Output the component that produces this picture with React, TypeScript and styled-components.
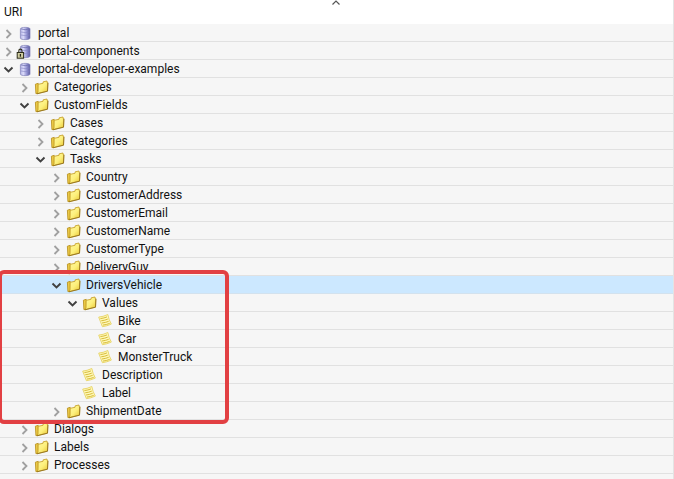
import React, { useState } from "react";
import styled, { createGlobalStyle } from "styled-components";

const GlobalStyle = createGlobalStyle`
  *, *::before, *::after { box-sizing: border-box; }
  body {
    margin: 0;
    min-height: 100vh;
    background: #f6f6f6;
    color: #111;
    font-family: Roboto, "Noto Sans", sans-serif;
    font-size: 12px;
    line-height: 17px;
  }
`;

const Page = styled.main`
  display: flex;
  flex-direction: column;
  min-height: 100vh;
  overflow: hidden;
  border-right: 1px solid #e4e4e4;
`;

const Header = styled.header`
  display: grid;
  grid-template-columns: 1fr auto 1fr;
  height: 24px;
  padding: 0 6px 0 4px;
  background: #fff;
`;

const ColumnTitle = styled.span`
  align-self: center;
`;

const TreeArea = styled.div`
  position: relative;
`;

const List = styled.ul`
  margin: 0;
  padding: 0;
  list-style: none;
`;

const Row = styled.div<{ $level: number; $selected?: boolean }>`
  display: flex;
  align-items: center;
  height: 18px;
  padding-left: ${(p) => p.$level * 16}px;
  border-bottom: 1px solid ${(p) => (p.$selected ? "#d3e2ee" : "#e1e1e1")};
  background: ${(p) => (p.$selected ? "#cce8ff" : "transparent")};
`;

const Toggle = styled.button<{ $open: boolean }>`
  display: flex;
  width: 18px;
  height: 17px;
  padding: 2px 0 0;
  border: 0;
  background: none;
  color: ${(p) => (p.$open ? "#404040" : "#a0a0a0")};
`;

const LeafSpace = styled.span`
  width: 18px;
`;

const IconBox = styled.span`
  display: flex;
  width: 20px;
  height: 16px;
`;

const Name = styled.span`
  padding-top: 2px;
`;

const Highlight = styled.div`
  position: absolute;
  top: 246px;
  left: -2px;
  width: 231px;
  height: 154px;
  border: 4px solid #e24043;
  border-radius: 6px;
  pointer-events: none;
`;

type Kind = "db" | "locked" | "folder" | "note";

interface Item {
  name: string;
  kind: Kind;
  open?: boolean;
  selected?: boolean;
  items?: Item[];
}

const folder = (name: string, items?: Item[], selected?: boolean): Item => ({
  name,
  kind: "folder",
  items,
  open: !!items,
  selected,
});
const note = (name: string): Item => ({ name, kind: "note" });

const data: Item[] = [
  { name: "portal", kind: "db" },
  { name: "portal-components", kind: "locked" },
  {
    name: "portal-developer-examples",
    kind: "db",
    open: true,
    items: [
      folder("Categories"),
      folder("CustomFields", [
        folder("Cases"),
        folder("Categories"),
        folder("Tasks", [
          folder("Country"),
          folder("CustomerAddress"),
          folder("CustomerEmail"),
          folder("CustomerName"),
          folder("CustomerType"),
          folder("DeliveryGuy"),
          folder(
            "DriversVehicle",
            [
              folder("Values", [note("Bike"), note("Car"), note("MonsterTruck")]),
              note("Description"),
              note("Label"),
            ],
            true
          ),
          folder("ShipmentDate"),
        ]),
      ]),
      folder("Dialogs"),
      folder("Labels"),
      folder("Processes"),
    ],
  },
];

function Chevron({ open }: { open: boolean }) {
  return (
    <svg width="16" height="16" viewBox="0 0 16 16" fill="none" stroke="currentColor" aria-hidden="true">
      <path d={open ? "M4.5 5.5 8.5 9.5 12.5 5.5" : "M6.5 4 10.5 8 6.5 12"} strokeWidth={open ? 1.9 : 1.8} />
    </svg>
  );
}

function DatabaseIcon({ locked }: { locked: boolean }) {
  return (
    <svg width="16" height="16" viewBox="0 0 16 16" overflow="visible" aria-hidden="true">
      <defs>
        <linearGradient id="cylinder">
          <stop offset="0" stopColor="#b4b4e6" />
          <stop offset="0.3" stopColor="#dcdcfa" />
          <stop offset="0.65" stopColor="#9696d4" />
          <stop offset="1" stopColor="#5a5a9e" />
        </linearGradient>
      </defs>
      <path d="M2.4 3.8C2.4 1.9 12 1.9 12 3.8V13.2C12 15.1 2.4 15.1 2.4 13.2Z" fill="url(#cylinder)" stroke="#8080b8" strokeWidth="0.7" />
      <path d="M3 3.9Q7 5.5 11.5 3.9" fill="none" stroke="#7070b0" strokeWidth="0.8" />
      <path d="M3 7Q7 8.3 11.5 7M3 10Q7 11.3 11.5 10" fill="none" stroke="#8484c2" strokeWidth="0.6" />
      {locked && (
        <g>
          <path d="M0.8 9.5V8Q0.8 6.1 2.4 6.1T4 8V9.5" fill="none" stroke="#30301c" strokeWidth="1.1" />
          <rect x="-0.8" y="9.5" width="6.4" height="5.7" fill="#d0cda0" stroke="#2b2b18" strokeWidth="1" />
          <path d="M2.4 11V13.7" stroke="#25251a" strokeWidth="1.3" />
        </g>
      )}
    </svg>
  );
}

function FolderIcon() {
  return (
    <svg width="16" height="16" viewBox="0 0 16 16" aria-hidden="true">
      <defs>
        <linearGradient id="folder" x1="0" y1="0" x2="1" y2="1">
          <stop offset="0" stopColor="#fff9a8" />
          <stop offset="0.55" stopColor="#fdf07c" />
          <stop offset="1" stopColor="#e6c32e" />
        </linearGradient>
      </defs>
      <path d="M1.4 5.2 4.2 4.3 4.4 14.3 1.9 14.6Z" fill="#eccb48" stroke="#b48c18" strokeWidth="0.8" strokeLinejoin="round" />
      <path d="M4.2 5.3 9 4.3 9.2 2.8 13 2 13.2 3.6 13.9 3.7 13.5 12.1 3.2 14.7 2.2 14.4 4 13.3Z" fill="url(#folder)" stroke="#c39b20" strokeWidth="0.8" strokeLinejoin="round" />
      <path d="M13.9 3.8 13.5 12.2 2.8 14.8" fill="none" stroke="#8b6b18" strokeWidth="0.8" />
    </svg>
  );
}

function NoteIcon() {
  return (
    <svg width="16" height="16" viewBox="0 0 16 16" aria-hidden="true">
      <path d="M0.7 4.1Q5 3.8 9.8 1.5Q10.8 6.8 13.3 11.1Q9 13.1 4.4 13.7Q2.4 8.5 0.7 4.1Z" fill="#fff8b8" stroke="#e6d263" strokeWidth="0.9" />
      <path d="M2.4 5.6Q6 5.2 9 3.9M3.2 7.8Q6.8 7.4 9.8 6.1M4 10Q7.6 9.6 10.7 8.3M4.9 12.1Q8.5 11.7 11.7 10.4" fill="none" stroke="#d3b52c" strokeWidth="0.9" />
    </svg>
  );
}

function ItemIcon({ kind }: { kind: Kind }) {
  if (kind === "folder") return <FolderIcon />;
  if (kind === "note") return <NoteIcon />;
  return <DatabaseIcon locked={kind === "locked"} />;
}

function TreeItem({ item, level }: { item: Item; level: number }) {
  const [open, setOpen] = useState(!!item.open);
  const expandable = item.kind !== "note";
  return (
    <li role="treeitem" aria-expanded={expandable ? open : undefined} aria-selected={!!item.selected}>
      <Row $level={level} $selected={item.selected}>
        {expandable ? (
          <Toggle $open={open} aria-label={`Toggle ${item.name}`} onClick={() => setOpen(!open)}>
            <Chevron open={open} />
          </Toggle>
        ) : (
          <LeafSpace />
        )}
        <IconBox>
          <ItemIcon kind={item.kind} />
        </IconBox>
        <Name>{item.name}</Name>
      </Row>
      {open && item.items && (
        <List role="group">
          {item.items.map((child) => (
            <TreeItem key={child.name} item={child} level={level + 1} />
          ))}
        </List>
      )}
    </li>
  );
}

export default function App() {
  return (
    <>
      <GlobalStyle />
      <Page>
        <Header>
          <ColumnTitle>URI</ColumnTitle>
          <svg width="10" height="6" viewBox="0 0 10 6" fill="none" stroke="#555" aria-hidden="true">
            <path d="M1.5 4.5 5 1 8.5 4.5" strokeWidth="1.2" />
          </svg>
        </Header>
        <TreeArea>
          <List role="tree" aria-label="URI">
            {data.map((item) => (
              <TreeItem key={item.name} item={item} level={0} />
            ))}
          </List>
          <Highlight />
        </TreeArea>
      </Page>
    </>
  );
}
